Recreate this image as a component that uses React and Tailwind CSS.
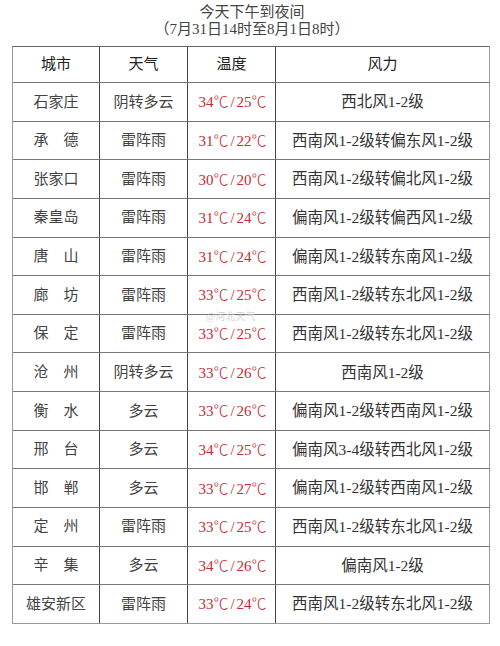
const rows = [
  ['石家庄', '阴转多云', '34℃/25℃', '西北风1-2级'],
  ['承　德', '雷阵雨', '31℃/22℃', '西南风1-2级转偏东风1-2级'],
  ['张家口', '雷阵雨', '30℃/20℃', '西南风1-2级转偏北风1-2级'],
  ['秦皇岛', '雷阵雨', '31℃/24℃', '偏南风1-2级转偏西风1-2级'],
  ['唐　山', '雷阵雨', '31℃/24℃', '偏南风1-2级转东南风1-2级'],
  ['廊　坊', '雷阵雨', '33℃/25℃', '西南风1-2级转东北风1-2级'],
  ['保　定', '雷阵雨', '33℃/25℃', '西南风1-2级转东北风1-2级'],
  ['沧　州', '阴转多云', '33℃/26℃', '西南风1-2级'],
  ['衡　水', '多云', '33℃/26℃', '偏南风1-2级转西南风1-2级'],
  ['邢　台', '多云', '34℃/25℃', '偏南风3-4级转西北风1-2级'],
  ['邯　郸', '多云', '33℃/27℃', '偏南风1-2级转西南风1-2级'],
  ['定　州', '雷阵雨', '33℃/25℃', '西南风1-2级转东北风1-2级'],
  ['辛　集', '多云', '34℃/26℃', '偏南风1-2级'],
  ['雄安新区', '雷阵雨', '33℃/24℃', '西南风1-2级转东北风1-2级'],
]

const font = { fontFamily: '"Liberation Serif", "Noto Sans CJK SC", serif' }

// the degree sign is a wide CJK glyph in the picture
function Temp({ value }) {
  const [hi, lo] = value.split('/')
  return (
    <span className="leading-[18px]">
      {hi.replace('℃', '')}
      <span className="font-['Noto_Sans_CJK_SC'] font-light">℃</span>
      <span className="px-[2px]">/</span>
      {lo.replace('℃', '')}
      <span className="font-['Noto_Sans_CJK_SC'] font-light">℃</span>
    </span>
  )
}

export default function App() {
  return (
    <div className="w-[500px] h-[646px] bg-white text-[#333] relative" style={font}>
      {/* Title */}
      <div className="pt-[4px] h-[46px] text-center text-[15px] leading-[17px] text-[#444] pl-[4px]">
        <div>今天下午到夜间</div>
        <div>（7月31日14时至8月1日8时）</div>
      </div>

      {/* Table */}
      <div className="ml-[12px] w-[478px] border border-[#999] border-t-[#666]">
        <div className="grid grid-cols-[87px_88px_88px_1fr] h-[35px] text-[15px] text-[#222]">
          <div className="flex items-center justify-center border-r border-[#444]">城市</div>
          <div className="flex items-center justify-center border-r border-[#444]">天气</div>
          <div className="flex items-center justify-center border-r border-[#444]">温度</div>
          <div className="flex items-center justify-center">风力</div>
        </div>
        {rows.map((r, i) => (
          <div
            key={i}
            className="grid grid-cols-[87px_88px_88px_1fr] h-[38.64px] border-t border-[#777] text-[15px]"
          >
            <div className="flex items-center justify-center border-r border-[#444] text-[#444]">{r[0]}</div>
            <div className="flex items-center justify-center border-r border-[#444] text-[#444]">{r[1]}</div>
            <div className="flex items-center justify-center border-r border-[#444] text-[#c62a32] pl-[2px]">
              <Temp value={r[2]} />
            </div>
            <div className="flex items-center justify-center text-[#333] text-[15.5px]">{r[3]}</div>
          </div>
        ))}
      </div>

      {/* weibo watermark */}
      <div className="absolute left-[206px] top-[311px] text-[10px] leading-[11px] text-[#ccc] opacity-80">
        @河北天气
      </div>
    </div>
  )
}
